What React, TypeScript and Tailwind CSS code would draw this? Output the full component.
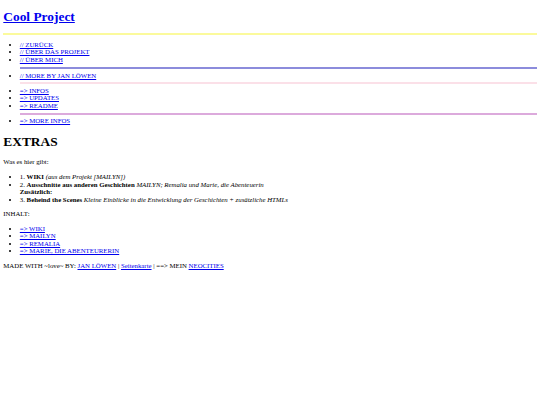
const link = 'text-[#0000ee] underline'

function Rule({ color, className = '' }: { color: string; className?: string }) {
  return <div className={`h-[2px] ${color} ${className}`} />
}

export default function App() {
  return (
    <div className="min-h-[405px] bg-white px-[3.3px] pt-[8.8px] font-['Liberation_Serif','Times_New_Roman',serif] text-[6.8px] leading-[1.1] text-black">
      <h1 className="text-[13.4px] font-bold leading-[1.15]">
        <a href="#" className={link}>Cool Project</a>
      </h1>

      <Rule color="bg-[#fbfa9c]" className="mt-[8.6px]" />

      {/* navigation */}
      <ul className="mt-[6px] list-disc pl-[16.5px]">
        <li><a href="#" className={link}>// ZURÜCK</a></li>
        <li><a href="#" className={link}>// ÜBER DAS PROJEKT</a></li>
        <li><a href="#" className={link}>// ÜBER MICH</a></li>
        <Rule color="bg-[#8c8cdc]" className="mt-[3.5px]" />
        <li className="mt-[3px]"><a href="#" className={link}>// MORE BY JAN LÖWEN</a></li>
        <Rule color="bg-[#fbe0e8]" className="mt-[3.3px]" />
        <li className="mt-[2.4px]"><a href="#" className={link}>=&gt; INFOS</a></li>
        <li><a href="#" className={link}>=&gt; UPDATES</a></li>
        <li><a href="#" className={link}>=&gt; README</a></li>
        <Rule color="bg-[#dcaadc]" className="mt-[3.3px]" />
        <li className="mt-[2.3px]"><a href="#" className={link}>=&gt; MORE INFOS</a></li>
      </ul>

      <h2 className="mt-[9.8px] text-[13.4px] font-bold leading-[1.15]">EXTRAS</h2>

      <p className="mt-[8.8px]">Was es hier gibt:</p>

      <ul className="mt-[7.5px] list-disc pl-[16.5px]">
        <li>
          1. <b>WIKI</b> <i>(aus dem Projekt [MAILYN])</i>
        </li>
        <li>
          2. <b>Ausschnitte aus anderen Geschichten</b>{' '}
          <i>MAILYN; Remalia und Marie, die Abenteuerin</i>
          <br />
          <b>Zusätzlich:</b>
        </li>
        <li>
          3. <b>Beheind the Scenes</b>{' '}
          <i>Kleine Einblicke in die Entwicklung der Geschichten + zusätzliche HTMLs</i>
        </li>
      </ul>

      <p className="mt-[6.8px]">INHALT:</p>

      <ul className="mt-[7.5px] list-disc pl-[16.5px]">
        <li><a href="#" className={link}>=&gt; WIKI</a></li>
        <li><a href="#" className={link}>=&gt; MAILYN</a></li>
        <li><a href="#" className={link}>=&gt; REMALIA</a></li>
        <li><a href="#" className={link}>=&gt; MARIE, DIE ABENTEURERIN</a></li>
      </ul>

      <p className="mt-[6.8px]">
        MADE WITH ~love~ BY: <a href="#" className={link}>JAN LÖWEN</a> |{' '}
        <a href="#" className={link}>Seitenkarte</a> | ==&gt; MEIN{' '}
        <a href="#" className={link}>NEOCITIES</a>
      </p>
    </div>
  )
}
